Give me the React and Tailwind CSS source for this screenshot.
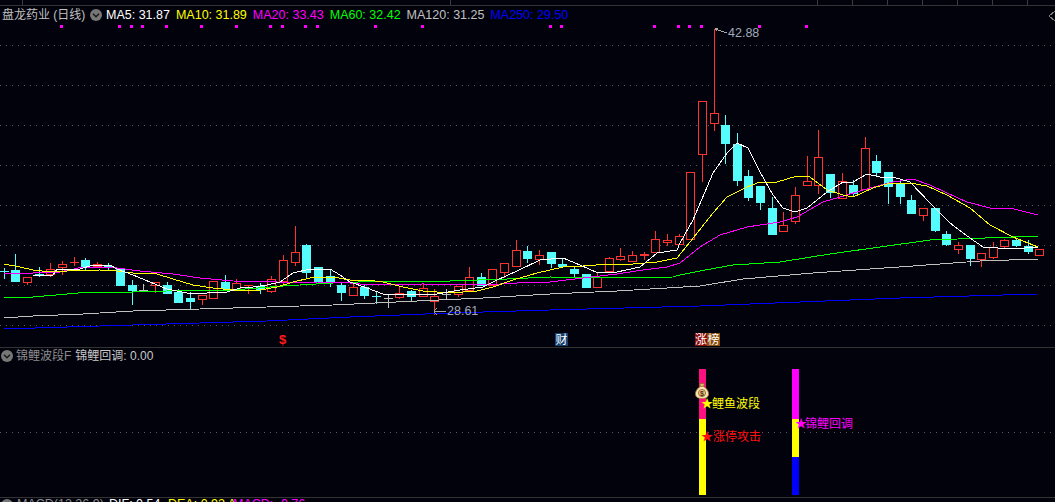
const RED = "#ff3232";
const CYAN = "#54fcfc";
const GRAY = "#c0c0c0";

// [index, kind, high, bodyTop, bodyBottom, low]
const candles = [
  [0,"c",268,271,271,279],[1,"c",254,270,281,282],[2,"r",277,277,282,285],[3,"c",267,274,275,277],[4,"r",263,269,274,277],
  [5,"r",261,264,267,275],[6,"r",257,262,262,266],[7,"c",258,260,266,270],[8,"r",262,264,266,268],[9,"c",263,266,266,270],
  [10,"c",269,269,285,286],[11,"c",280,285,290,305],[12,"g",284,290,290,290],[13,"r",282,282,285,293],[14,"c",282,285,293,294],
  [15,"c",289,292,302,303],[16,"c",292,298,301,309],[17,"r",295,295,299,305],[18,"r",281,281,298,298],[19,"c",275,282,288,289],
  [20,"r",279,283,289,290],[21,"r",285,285,285,294],[22,"c",283,286,289,294],[23,"r",276,279,291,293],[24,"r",255,260,281,285],
  [25,"r",226,252,262,266],[26,"c",244,245,272,278],[27,"c",267,267,281,282],[28,"c",269,276,281,287],[29,"c",282,285,292,301],
  [30,"r",283,287,295,295],[31,"c",285,287,295,299],[32,"c",292,296,296,304],[33,"g",294,298,298,308],[34,"r",287,293,297,299],
  [35,"c",290,291,296,301],[36,"r",283,288,296,297],[37,"r",289,296,301,315],[38,"g",289,294,294,299],[39,"r",286,286,294,297],
  [40,"r",267,277,290,291],[41,"c",273,277,285,285],[42,"r",269,269,285,285],[43,"r",263,263,272,278],[44,"r",240,250,266,267],
  [45,"c",246,251,258,263],[46,"r",250,255,259,265],[47,"c",252,252,263,268],[48,"c",259,264,266,266],[49,"c",266,269,273,277],
  [50,"c",274,274,287,288],[51,"r",273,277,287,287],[52,"r",257,258,271,273],[53,"r",248,256,259,261],[54,"r",251,255,261,261],
  [55,"r",252,254,255,260],[56,"r",231,239,252,253],[57,"r",234,240,242,246],[58,"r",234,236,244,245],[59,"r",172,172,239,240],
  [60,"r",101,101,154,182],[61,"r",29,113,123,131],[62,"c",115,125,143,164],[63,"c",133,144,180,186],[64,"c",170,176,197,201],
  [65,"c",186,186,202,210],[66,"c",197,208,234,234],[67,"r",212,225,231,232],[68,"r",187,195,221,224],[69,"r",156,181,185,186],
  [70,"r",130,157,185,194],[71,"c",174,174,192,198],[72,"r",173,181,198,198],[73,"c",180,185,193,196],[74,"r",137,148,189,190],
  [75,"c",155,161,172,177],[76,"c",172,172,186,204],[77,"c",180,184,196,204],[78,"c",195,200,213,214],[79,"r",208,208,215,221],
  [80,"c",208,208,230,232],[81,"c",231,234,244,246],[82,"r",242,245,249,254],[83,"c",245,245,258,266],[84,"r",253,253,259,267],
  [85,"r",242,247,257,259],[86,"r",239,240,246,249],[87,"c",238,240,245,247],[88,"c",240,246,251,254],[89,"r",249,249,255,256],
];

const lines = [
  { color: "#0000ff", pts: "4,329 67,327 133,325 200,323 267,321 350,317 450,313 550,310 700,306 800,302 900,298 1038,294" },
  { color: GRAY, pts: "4,318 33,316 83,314 133,311 200,309 267,307 333,305 417,301 483,298 550,294 617,291 700,286 743,279 813,273 913,266 980,261 1038,259" },
  { color: "#00ff00", pts: "4,298 33,297 67,294 90,292 133,292 167,291 233,290 283,286 333,283 383,281 450,281 507,279 550,277 617,278 673,277 680,275 700,271 733,265 780,262 830,254 880,247 930,240 1013,237 1038,236" },
  { color: "#ff00ff", pts: "4,274 33,273 60,272 83,267 117,268 140,271 173,274 200,278 233,281 277,282 317,282 350,283 370,285 423,284 483,285 517,283 550,282 583,278 617,274 643,270 667,267 680,263 700,247 720,235 747,227 780,222 797,217 823,202 847,195 870,188 893,182 913,179 930,185 947,193 967,202 990,208 1010,208 1038,215" },
  { color: "#ffff00", pts: "4,264 20,267 33,270 50,272 67,271 100,270 117,271 133,273 157,274 173,279 193,285 213,288 233,290 260,290 277,287 293,282 310,278 333,277 350,280 367,280 383,282 403,287 423,291 450,293 477,291 493,287 513,280 537,273 563,267 583,266 610,264 633,264 657,262 677,258 690,242 713,213 727,197 747,187 760,182 777,182 797,176 810,177 827,190 843,195 853,197 873,188 890,183 910,183 927,186 947,195 970,208 990,225 1013,237 1038,247" },
  { color: "#ffffff", pts: "33,275 53,275 57,269 80,269 93,265 110,265 117,269 133,275 150,282 167,289 187,293 207,293 227,292 240,288 253,287 267,285 280,282 293,273 310,269 330,269 340,275 350,282 367,288 383,294 410,295 437,294 460,290 483,287 497,280 517,271 540,260 563,258 580,265 598,273 617,272 640,267 657,253 677,250 680,243 693,220 713,173 727,153 737,143 748,148 760,172 773,195 783,208 795,212 807,208 827,192 843,182 853,182 867,174 880,177 893,177 910,182 930,203 950,223 970,238 983,247 1013,249 1038,247" },
];

const dots = [61,119,131,142,166,201,236,270,282,305,317,375,422,550,561,654,678,689,701,759,806];
const gridY = [45,85,125,165,205,245,285,325];
const ticks = ["w-[428px]","w-[367px]","w-[35px]","w-[35px]","w-[35px]","w-[35px]","w-[35px]","w-[35px]","w-[28px]"];

function Chevron({ className }) {
  return (
    <svg viewBox="0 0 12 12" className={className}>
      <circle cx="6" cy="6" r="6" fill="#777777" />
      <path d="M3 4.8 L6 7.8 L9 4.8" fill="none" stroke="#1a1a1a" strokeWidth="1.5" />
    </svg>
  );
}

function MainChart() {
  return (
    <svg viewBox="0 6 1055 341" shapeRendering="crispEdges" className="block h-[341px] w-[1055px]">
      {gridY.map((y) => (
        <line key={y} x1="0" x2="1055" y1={y + 0.5} y2={y + 0.5} stroke="#5a5a5a" strokeDasharray="1 5" />
      ))}
      {dots.map((x) => (
        <rect key={x} x={x - 1} y="25" width="3" height="3" fill="#ff00ff" />
      ))}
      {candles.map(([i, kind, hi, top, bot, lo]) => {
        const cx = Math.floor(4.25 + i * 11.636) + 0.5;
        const color = kind === "r" ? RED : kind === "c" ? CYAN : GRAY;
        return (
          <g key={i}>
            <line x1={cx} x2={cx} y1={hi} y2={lo} stroke={color} />
            {top === bot ? (
              <line x1={cx - 4.5} x2={cx + 4.5} y1={top + 0.5} y2={top + 0.5} stroke={color} />
            ) : (
              <rect
                x={cx - 4}
                y={top + 0.5}
                width="8"
                height={bot - top}
                stroke={color}
                fill={kind === "r" ? "#02020c" : color}
              />
            )}
          </g>
        );
      })}
      {lines.map((l) => (
        <polyline key={l.color} points={l.pts} fill="none" stroke={l.color} strokeWidth="1" />
      ))}
      <path d="M715 29 L727 33 M715 29 L718 28 M715 29 L717 31" fill="none" stroke="#a8a8a8" />
      <path d="M434 311.5 L446 311.5 M434 311.5 L437 308 M434 311.5 L437 315" fill="none" stroke="#a8a8a8" />
      <path d="M1055 11 L1049 16 L1055 21" fill="none" stroke="#808080" />
    </svg>
  );
}

function MoneyBag() {
  return (
    <svg viewBox="0 0 14 16" className="absolute left-[695px] top-[35px] h-[16px] w-[14px]">
      <path d="M4.5 0.5 H9.5 L8.5 3.5 H5.5 Z" fill="#d8b860" stroke="#8a5a20" strokeWidth="0.6" />
      <path d="M5.5 3.5 H8.5 C12 5.5 13.8 8.5 13.5 11.5 C13.2 14.5 10.5 15.5 7 15.5 C3.5 15.5 0.8 14.5 0.5 11.5 C0.2 8.5 2 5.5 5.5 3.5 Z" fill="#f8e6b4" stroke="#a87830" strokeWidth="0.8" />
      <circle cx="7" cy="10" r="3.6" fill="#e8c888" stroke="#7a4a18" strokeWidth="0.7" />
      <text x="7" y="12.6" textAnchor="middle" fontSize="7" fontWeight="700" fill="#5a2a08" fontFamily="'Liberation Sans', sans-serif">$</text>
    </svg>
  );
}

export default function App() {
  return (
    <div className="flex h-[502px] w-[1055px] flex-col overflow-hidden bg-[#02020c] font-['Liberation_Sans','Noto_Sans_CJK_SC',sans-serif] text-[13px] leading-none">
      <div className="flex h-[5px] shrink-0 pl-[22px]">
        {ticks.map((w, i) => (
          <div key={i} className={`h-full shrink-0 border-l border-[#3c3c3c] ${w}`} />
        ))}
      </div>

      <section className="relative h-[343px] shrink-0 border-y border-[#333333]">
        <MainChart />
        <div className="absolute left-[2px] top-[1px] flex h-[16px] items-center whitespace-nowrap">
          <span className="w-[82px] text-[12px] text-[#c0c0c0]">盘龙药业 (日线)</span>
          <Chevron className="ml-[6px] h-[12px] w-[12px]" />
          <div className="ml-[4px] flex gap-[6px] text-[12.5px]">
            <span className="text-white">MA5: 31.87</span>
            <span className="text-[#ffff00]">MA10: 31.89</span>
            <span className="text-[#ff00ff]">MA20: 33.43</span>
            <span className="text-[#00ff00]">MA60: 32.42</span>
            <span className="text-[#c0c0c0]">MA120: 31.25</span>
            <span className="text-[#0000ff]">MA250: 29.50</span>
          </div>
        </div>
        <span className="absolute left-[728px] top-[21px] text-[12.5px] text-[#a0aab8]">42.88</span>
        <span className="absolute left-[447px] top-[299px] text-[12.5px] text-[#a0aab8]">28.61</span>
        <span className="absolute left-[279px] top-[327px] text-[13px] font-bold text-[#ff1a1a]">$</span>
        <span className="absolute left-[555px] top-[327px] flex h-[13px] w-[13px] items-center justify-center bg-[#12406f] text-[12px] text-white">财</span>
        <div className="absolute left-[695px] top-[327px] flex text-[12px] text-white">
          <span className="flex h-[13px] w-[12px] items-center justify-center bg-[#8a0a0a]">涨</span>
          <span className="flex h-[13px] w-[13px] items-center justify-center bg-[#8a5010]">榜</span>
        </div>
      </section>

      <section className="relative h-[150px] shrink-0 border-b border-[#333333]">
        <div className="absolute left-[1px] top-[1px] flex h-[14px] items-center whitespace-nowrap">
          <Chevron className="h-[12px] w-[12px]" />
          <span className="ml-[3px] text-[12px] text-[#8c8c8c]">锦鲤波段F</span>
          <span className="ml-[4px] text-[12px] text-[#c8c8c8]">锦鲤回调: 0.00</span>
        </div>
        <div className="mt-[84px] h-px bg-[repeating-linear-gradient(90deg,#5a5a5a_0_1px,transparent_1px_6px)]" />

        <div className="absolute left-[699px] top-[21px] flex h-[126px] w-[7px] flex-col">
          <div className="h-[50px] bg-[#ff1080]" />
          <div className="h-[76px] bg-[#ffff00]" />
        </div>
        <div className="absolute left-[792px] top-[21px] flex h-[126px] w-[7px] flex-col">
          <div className="h-[50px] bg-[#ff00ff]" />
          <div className="h-[38px] bg-[#ffff00]" />
          <div className="h-[38px] bg-[#0000ff]" />
        </div>
        <MoneyBag />
        <span className="absolute left-[701px] top-[50px] flex items-center whitespace-nowrap text-[12px] text-[#ffff00]">★<span className="-ml-[1px]">鲤鱼波段</span></span>
        <span className="absolute left-[701px] top-[83px] flex items-center whitespace-nowrap text-[12px] text-[#ff1010]">★<span>涨停攻击</span></span>
        <span className="absolute left-[795px] top-[70px] flex items-center whitespace-nowrap text-[12px] text-[#ff00ff]">★<span className="-ml-[2px]">锦鲤回调</span></span>
      </section>

      <div className="flex h-[5px] shrink-0 items-start overflow-hidden whitespace-nowrap pl-[1px] text-[12.5px]">
        <Chevron className="mt-[1px] h-[12px] w-[12px] shrink-0" />
        <span className="ml-[4px] w-[83px] text-[#8c8c8c]">MACD(12,26,9)</span>
        <span className="ml-[9px] w-[51px] text-white">DIF: 0.54</span>
        <span className="ml-[8px] w-[62px] text-[#ffff00]">DEA: 0.92 A</span>
        <span className="ml-[3px] text-[#ff00ff]">MACD: -0.76</span>
      </div>
    </div>
  );
}
